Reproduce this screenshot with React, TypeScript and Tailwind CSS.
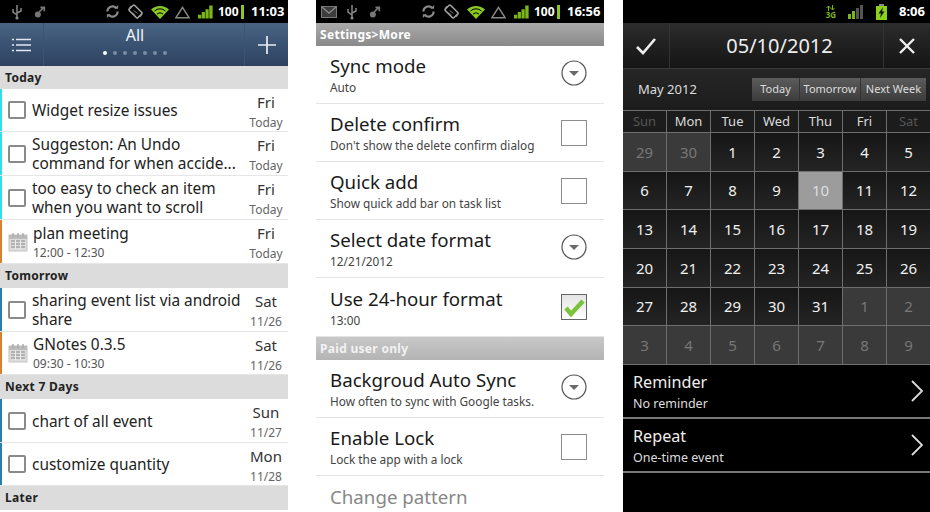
import React from "react";

const font = { fontFamily: '"Noto Sans", "Open Sans", sans-serif' };

function Status({ time, mail }: { time: string; mail?: boolean }) {
  return (
    <div className="h-[23px] bg-black flex items-center text-white shrink-0">
      {mail && (
        <svg width="16" height="12" viewBox="0 0 16 12" className="ml-[5px]">
          <rect x="0.5" y="0.5" width="15" height="11" fill="#3c3c3c" stroke="#777" />
          <path d="M1 1l7 6 7-6" fill="none" stroke="#888" strokeWidth="1.4" />
        </svg>
      )}
      <svg width="12" height="16" viewBox="0 0 12 16" className={mail ? "ml-[9px]" : "ml-[11px]"}>
        <path d="M6 1v14M6 11L2 8V5M6 9l4-2V4" fill="none" stroke="#888" strokeWidth="1.5" />
        <circle cx="6" cy="14" r="1.6" fill="#888" />
      </svg>
      <svg width="12" height="14" viewBox="0 0 14 14" className="ml-[11px]">
        <circle cx="4.5" cy="10" r="3.5" fill="#777" />
        <path d="M6 7l5-5M7.5 1.5H12V6" fill="none" stroke="#777" strokeWidth="2" />
      </svg>
      <div className="flex-1" />
      <svg width="15" height="15" viewBox="0 0 16 16" className="mr-[8px]">
        <path d="M2.5 8a5.5 5.5 0 0 1 9.5-3.7M13.5 8a5.5 5.5 0 0 1-9.5 3.7" fill="none" stroke="#8a8a8a" strokeWidth="2.2" />
        <path d="M10 5h4V1zM6 11H2v4z" fill="#8a8a8a" />
      </svg>
      <svg width="15" height="15" viewBox="0 0 16 16" className="mr-[8px]">
        <rect x="4" y="1.5" width="8" height="13" rx="1" fill="none" stroke="#aaa" strokeWidth="1.5" transform="rotate(-45 8 8)" />
        <path d="M6 7l4 3M5 9l3 3" stroke="#777" strokeWidth="1" />
        <path d="M1 5l2-3M15 11l-2 3" stroke="#999" />
      </svg>
      <svg width="18" height="14" viewBox="0 0 18 14" className="mr-[6px]">
        <path d="M0 4.5a13 13 0 0 1 18 0L9 14z" fill="#8bc820" />
        <path d="M3.5 6a8 8 0 0 1 11 0" fill="none" stroke="#000" strokeWidth="1" />
        <path d="M6 9a4.5 4.5 0 0 1 6 0" fill="none" stroke="#000" strokeWidth="1" />
      </svg>
      <svg width="15" height="14" viewBox="0 0 16 14" className="mr-[8px]">
        <path d="M8 2L15 13H1z" fill="none" stroke="#888" strokeWidth="1.6" />
      </svg>
      <svg width="15" height="14" viewBox="0 0 16 14" className="mr-[5px]">
        <path d="M0 10h3.4v4H0zM4 7h3.4v7H4zM8 4h3.4v10H8zM12 0h3.6v14H12z" fill="#7cb518" />
      </svg>
      <span className="text-[12px] font-bold leading-none w-[23px]">100</span>
      <div className="w-[3px] h-[14px] bg-[#8bc820]" />
      <span className="text-[13px] font-bold leading-none ml-[7px] mr-[6px] w-[31px] whitespace-nowrap">{time}</span>
    </div>
  );
}

function Box() {
  return <div className="w-[18px] h-[18px] rounded-[2px] border-[2px] border-[#8a8a8a] bg-white ml-[6px] shrink-0" />;
}

function Cal() {
  return (
    <svg width="20" height="20" viewBox="0 0 20 20" className="ml-[6px] shrink-0">
      <rect x="1" y="3" width="18" height="16" fill="#ddd" stroke="#c4c4c4" />
      <rect x="1" y="3" width="18" height="4" fill="#bbb" />
      <path d="M5 1v4M10 1v4M15 1v4" stroke="#aaa" strokeWidth="1.4" />
      <path d="M3 9h14M3 12h14M3 15h14" stroke="#a4a4a4" strokeWidth="1.6" />
      <path d="M7.5 8v9M12.5 8v9" stroke="#eee" strokeWidth="1" />
    </svg>
  );
}

type T = { bar: string; cal?: boolean; l1: string; l2?: string; sub?: string; d: string; e: string; h: string };

function Task({ t }: { t: T }) {
  return (
    <div className={`flex items-center border-b border-[#e6e6e6] shrink-0 ${t.h}`}>
      <div className="w-[2px] self-stretch" style={{ background: t.bar }} />
      {t.cal ? <Cal /> : <Box />}
      <div className={`flex-1 min-w-0 text-[#222] leading-[19px] text-[15.4px] pt-[1px] ${t.cal ? "ml-[5px]" : "ml-[6px]"}`}>
        <div className="whitespace-nowrap">{t.l1}</div>
        {t.l2 && <div className="whitespace-nowrap">{t.l2}</div>}
        {t.sub && <div className="text-[12px] leading-[17px] mt-[1px] text-[#555]">{t.sub}</div>}
      </div>
      <div className="w-[44px] text-center shrink-0 pt-[3px]">
        <div className="text-[15px] leading-[21px] text-[#333]">{t.d}</div>
        <div className="text-[12px] leading-[19px] text-[#666]">{t.e}</div>
      </div>
    </div>
  );
}

function Sec({ s, h = "h-[24px]" }: { s: string; h?: string }) {
  return <div className={`${h} shrink-0 bg-[#dcdcdc] flex items-center pl-[5px] text-[12px] font-bold text-[#222] tracking-[0.3px]`}>{s}</div>;
}

function Left() {
  return (
    <div className="w-[288px] h-full shrink-0 flex flex-col bg-white overflow-hidden">
      <Status time="11:03" />
      <div className="h-[43px] shrink-0 bg-gradient-to-b from-[#4a6484] to-[#2c4260] flex text-white">
        <div className="w-[44px] border-r border-[#3c5472] flex items-center justify-center">
          <svg width="20" height="14" viewBox="0 0 20 14">
            <path d="M0 1.5h2M4 1.5h15M0 7h2M4 7h15M0 12.5h2M4 12.5h15" stroke="#e4e8ee" strokeWidth="1.6" />
          </svg>
        </div>
        <div className="flex-1 flex flex-col items-center pr-[18px]">
          <div className="text-[16px] leading-[20px] mt-[2px] text-[#f2f4f8]">All</div>
          <div className="flex gap-[6px] items-center mt-[6px]">
            <span className="w-[4px] h-[4px] rounded-full bg-white" />
            {[0, 1, 2, 3, 4, 5].map((i) => (
              <span key={i} className="w-[4px] h-[4px] rounded-full bg-[#7a8ca4]" />
            ))}
          </div>
        </div>
        <div className="w-[44px] border-l border-[#3c5472] flex items-center justify-center">
          <svg width="20" height="20" viewBox="0 0 20 20">
            <path d="M10 1v18M1 10h18" stroke="#e8ecf2" strokeWidth="1.7" />
          </svg>
        </div>
      </div>
      <Sec s="Today" h="h-[23px]" />
      <Task t={{ bar: "#2de0ea", l1: "Widget resize issues", d: "Fri", e: "Today", h: "h-[43px]" }} />
      <Task t={{ bar: "#2de0ea", l1: "Suggeston: An Undo", l2: "command for when accide...", d: "Fri", e: "Today", h: "h-[44px]" }} />
      <Task t={{ bar: "#2de0ea", l1: "too easy to check an item", l2: "when you want to scroll", d: "Fri", e: "Today", h: "h-[44px]" }} />
      <Task t={{ bar: "#d9822b", cal: true, l1: "plan meeting", sub: "12:00 - 12:30", d: "Fri", e: "Today", h: "h-[44px]" }} />
      <Sec s="Tomorrow" />
      <Task t={{ bar: "#2a7fa8", l1: "sharing event list via android", l2: "share", d: "Sat", e: "11/26", h: "h-[44px]" }} />
      <Task t={{ bar: "#d9822b", cal: true, l1: "GNotes 0.3.5", sub: "09:30 - 10:30", d: "Sat", e: "11/26", h: "h-[43px]" }} />
      <Sec s="Next 7 Days" />
      <Task t={{ bar: "#2a7fa8", l1: "chart of all event", d: "Sun", e: "11/27", h: "h-[44px]" }} />
      <Task t={{ bar: "#2a7fa8", l1: "customize quantity", d: "Mon", e: "11/28", h: "h-[43px]" }} />
      <Sec s="Later" />
    </div>
  );
}

function Pref({ t, s, k, h = "h-[58px]" }: { t: string; s?: string; k?: "drop" | "box" | "check"; h?: string }) {
  return (
    <div className={`${h} shrink-0 border-b border-[#e4e4e4] flex items-center pl-[14px] pr-[17px]`}>
      <div className="flex-1 min-w-0 -mt-[1px]">
        <div className="text-[18.7px] leading-[26px] text-[#1a1a1a]">{t}</div>
        {s && <div className="text-[11.8px] leading-[16px] text-[#444]">{s}</div>}
      </div>
      {k === "drop" && (
        <svg width="26" height="26" viewBox="0 0 26 26" className="-mt-[3px]">
          <circle cx="13" cy="13" r="12" fill="#fff" stroke="#555" strokeWidth="1.2" />
          <path d="M8 11h10l-5 5z" fill="#6a6a6a" />
        </svg>
      )}
      {k === "box" && <div className="w-[26px] h-[26px] border border-[#8c8c8c]" />}
      {k === "check" && (
        <div className="w-[26px] h-[26px] border border-[#666] bg-gradient-to-b from-[#e4e4e4] to-white flex items-center justify-center">
          <svg width="22" height="20" viewBox="0 0 22 20">
            <path d="M3 11l5 6L20 4" fill="none" stroke="#7cc23a" strokeWidth="4.5" />
          </svg>
        </div>
      )}
    </div>
  );
}

function Middle() {
  return (
    <div className="w-[288px] ml-[28px] h-full shrink-0 flex flex-col bg-white overflow-hidden">
      <Status time="16:56" mail />
      <div className="h-[23px] shrink-0 bg-gradient-to-b from-[#aaaaaa] to-[#8a8a8a] flex items-center pl-[4px] text-white text-[12px] font-bold tracking-[0.3px]">Settings&gt;More</div>
      <Pref t="Sync mode" s="Auto" k="drop" />
      <Pref t="Delete confirm" s="Don't show the delete confirm dialog" k="box" />
      <Pref t="Quick add" s="Show quick add bar on task list" k="box" />
      <Pref t="Select date format" s="12/21/2012" k="drop" />
      <Pref t="Use 24-hour format" s="13:00" k="check" h="h-[59px]" />
      <div className="h-[23px] shrink-0 bg-gradient-to-b from-[#c8c8c8] to-[#b4b4b4] flex items-center pl-[4px] text-[#f2f2f2] text-[12px] font-bold tracking-[0.3px]">Paid user only</div>
      <Pref t="Backgroud Auto Sync" s="How often to sync with Google tasks." k="drop" />
      <Pref t="Enable Lock" s="Lock the app with a lock" k="box" />
      <div className="pl-[14px] pt-[8px] text-[18.7px] leading-[26px] text-[#888]">Change pattern</div>
    </div>
  );
}

const weeks: [number, number][][] = [
  [[29, 2], [30, 2], [1, 0], [2, 0], [3, 0], [4, 0], [5, 0]],
  [[6, 0], [7, 0], [8, 0], [9, 0], [10, 3], [11, 0], [12, 0]],
  [[13, 0], [14, 0], [15, 0], [16, 0], [17, 0], [18, 0], [19, 0]],
  [[20, 0], [21, 0], [22, 0], [23, 0], [24, 0], [25, 0], [26, 0]],
  [[27, 0], [28, 0], [29, 0], [30, 0], [31, 0], [1, 2], [2, 2]],
  [[3, 2], [4, 2], [5, 2], [6, 2], [7, 2], [8, 2], [9, 2]],
];

function Cell({ n, k }: { n: number; k: number }) {
  const cls =
    k === 3
      ? "bg-[#9c9c9c] text-[#dedede]"
      : k === 2
      ? "bg-[#3a3a3a] text-[#777]"
      : "bg-gradient-to-b from-[#161616] to-[#242424] text-[#f0f0f0]";
  return <div className={`flex items-center justify-center text-[15px] ${cls}`}>{n}</div>;
}

function Row({ t, s }: { t: string; s: string }) {
  return (
    <div className="h-[54px] shrink-0 border-b-2 border-[#777] flex items-center pl-[10px] pr-[7px]">
      <div className="flex-1 mt-[1px]">
        <div className="text-[16.2px] leading-[24px] text-[#eee]">{t}</div>
        <div className="text-[12.5px] leading-[18px] text-[#ddd] mt-[1px]">{s}</div>
      </div>
      <svg width="12" height="22" viewBox="0 0 12 22">
        <path d="M1 1l10 10L1 21" fill="none" stroke="#ddd" strokeWidth="1.8" />
      </svg>
    </div>
  );
}

function Right() {
  return (
    <div className="w-[307px] ml-[19px] h-full shrink-0 flex flex-col bg-black overflow-hidden">
      <div className="h-[23px] shrink-0 flex items-center justify-end text-white">
        <div className="flex flex-col items-center mr-[12px]">
          <svg width="9" height="6" viewBox="0 0 9 6">
            <path d="M2.5 6V1M0.5 3l2-2 2 2M6.5 0v5M4.5 3l2 2 2-2" fill="none" stroke="#7cb518" strokeWidth="1" />
          </svg>
          <span className="text-[8px] leading-[8px] font-bold text-[#7cb518]">3G</span>
        </div>
        <svg width="16" height="14" viewBox="0 0 16 14" className="mr-[12px]">
          <path d="M0 9h3v5H0z M4 6h3v8H4z" fill="#7cb518" />
          <path d="M8 3h3v11H8zM12 0h3v14h-3z" fill="#555" />
        </svg>
        <svg width="11" height="16" viewBox="0 0 11 16" className="mr-[12px]">
          <rect x="0" y="2" width="11" height="14" fill="#8cd01e" />
          <rect x="3" y="0" width="5" height="2" fill="#888" />
          <path d="M7 3L2.5 9.5h2.5L4 14l4.5-6.5H6z" fill="#111" />
        </svg>
        <span className="text-[13px] font-bold leading-none mr-[5px]">8:06</span>
      </div>
      <div className="h-[46px] shrink-0 bg-gradient-to-b from-[#2c2c2c] to-[#151515] border-b border-[#3a3a3a] flex">
        <div className="w-[47px] border-r border-[#333] flex items-center justify-center">
          <svg width="22" height="18" viewBox="0 0 22 18">
            <path d="M2 10l6 6L20 2" fill="none" stroke="#eee" strokeWidth="2.6" />
          </svg>
        </div>
        <div className="flex-1 flex items-center justify-center pl-[6px] text-[20px] text-[#eee]">05/10/2012</div>
        <div className="w-[47px] border-l border-[#333] flex items-center justify-center">
          <svg width="18" height="18" viewBox="0 0 18 18">
            <path d="M2 2l14 14M16 2L2 16" stroke="#eee" strokeWidth="2.4" />
          </svg>
        </div>
      </div>
      <div className="h-[41px] shrink-0 bg-gradient-to-b from-[#262626] to-[#1c1c1c] flex items-center pl-[15px] pr-[4px]">
        <div className="flex-1 text-[13px] text-[#ddd]">May 2012</div>
        <div className="flex h-[23px] bg-gradient-to-b from-[#5c5c5c] to-[#3c3c3c] text-[11px] text-[#ddd]">
          <div className="w-[48px] flex items-center justify-center border-r border-[#333]">Today</div>
          <div className="w-[61px] flex items-center justify-center border-r border-[#333]">Tomorrow</div>
          <div className="w-[65px] flex items-center justify-center whitespace-nowrap">Next Week</div>
        </div>
      </div>
      <div className="grid grid-cols-7 gap-[1px] bg-[#6e6e6e] py-[1px] h-[255px] shrink-0 grid-rows-[21px_repeat(6,1fr)]">
        {["Sun", "Mon", "Tue", "Wed", "Thu", "Fri", "Sat"].map((d, i) => (
          <div key={d} className={`flex items-center justify-center bg-[#1c1c1c] text-[13px] ${i === 0 || i === 6 ? "text-[#555]" : "text-[#ddd]"}`}>{d}</div>
        ))}
        {weeks.flat().map(([n, k], i) => (
          <Cell key={i} n={n} k={k} />
        ))}
      </div>
      <Row t="Reminder" s="No reminder" />
      <Row t="Repeat" s="One-time event" />
    </div>
  );
}

export default function App() {
  return (
    <div className="w-[930px] h-[512px] flex bg-white overflow-hidden" style={font}>
      <Left />
      <Middle />
      <Right />
    </div>
  );
}
